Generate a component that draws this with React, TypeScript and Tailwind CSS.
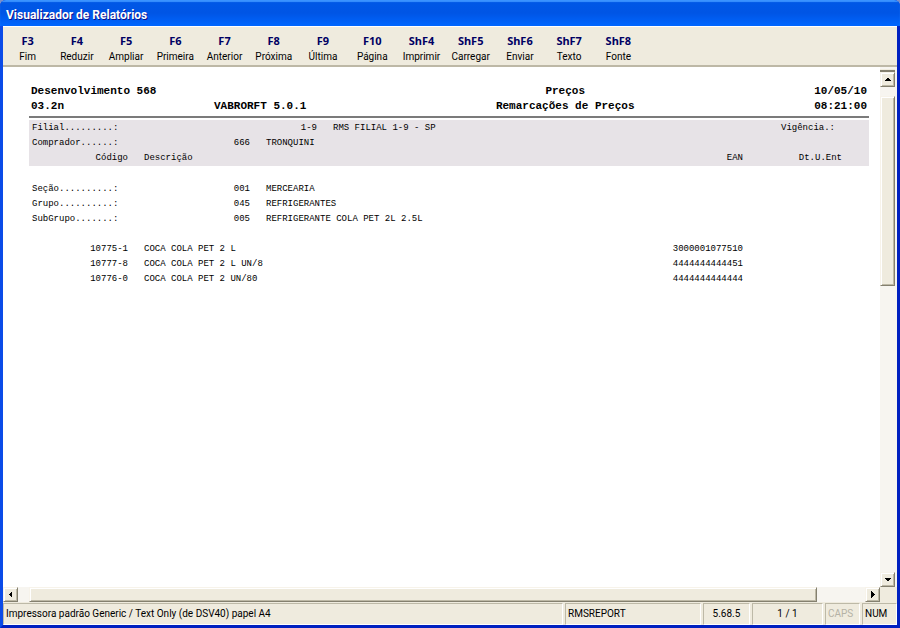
import React from "react";

type Shortcut = {
  shortcut: string;
  label: string;
};

type Product = {
  code: string;
  description: string;
  ean: string;
  lastEntry: string;
};

const SHORTCUTS: Shortcut[] = [
  { shortcut: "F3", label: "Fim" },
  { shortcut: "F4", label: "Reduzir" },
  { shortcut: "F5", label: "Ampliar" },
  { shortcut: "F6", label: "Primeira" },
  { shortcut: "F7", label: "Anterior" },
  { shortcut: "F8", label: "Próxima" },
  { shortcut: "F9", label: "Última" },
  { shortcut: "F10", label: "Página" },
  { shortcut: "ShF4", label: "Imprimir" },
  { shortcut: "ShF5", label: "Carregar" },
  { shortcut: "ShF6", label: "Enviar" },
  { shortcut: "ShF7", label: "Texto" },
  { shortcut: "ShF8", label: "Fonte" },
];

const GROUPS = [
  { label: "Seção..........:", code: "001", name: "MERCEARIA" },
  { label: "Grupo..........:", code: "045", name: "REFRIGERANTES" },
  { label: "SubGrupo.......:", code: "005", name: "REFRIGERANTE COLA PET 2L 2.5L" },
];

const PRODUCTS: Product[] = [
  { code: "10775-1", description: "COCA COLA PET 2 L", ean: "3000001077510", lastEntry: "" },
  { code: "10777-8", description: "COCA COLA PET 2 L UN/8", ean: "4444444444451", lastEntry: "" },
  { code: "10776-0", description: "COCA COLA PET 2 UN/80", ean: "4444444444444", lastEntry: "" },
];

// Raised edge shared by the scroll buttons and thumbs
const RAISED =
  "bg-[#efebde] border border-t-[#f7f3ea] border-l-[#f7f3ea] border-r-[#84806f] border-b-[#84806f] shadow-[inset_1px_1px_0_#ffffff,inset_-1px_-1px_0_#bdb8a5]";

const SUNKEN = "border border-t-[#bdb9a7] border-l-[#bdb9a7] border-r-white border-b-white";

function ScrollButton({ label, points }: { label: string; points: string }) {
  return (
    <button
      type="button"
      aria-label={label}
      className={`flex size-[15px] shrink-0 items-center justify-center ${RAISED}`}
    >
      <svg className="size-[9px] shrink-0" viewBox="0 0 9 9" shapeRendering="crispEdges">
        <polygon points={points} fill="#000" />
      </svg>
    </button>
  );
}

function Toolbar() {
  return (
    <div className="border-t border-b-2 border-t-white border-b-[#bdb8a6] bg-[#efebde] pt-[6px]">
      <div className="grid w-full max-w-[640px] grid-cols-13">
        {SHORTCUTS.map((item) => (
          <button key={item.shortcut} type="button" className="flex flex-col items-center">
            <span className="font-['Noto_Sans',sans-serif] text-[11px] leading-4 font-bold text-[#000063]">
              {item.shortcut}
            </span>
            <span className="text-[10px] leading-4 text-black">{item.label}</span>
          </button>
        ))}
      </div>
    </div>
  );
}

function InfoLine({
  label,
  code,
  name,
  wide,
  children,
}: {
  label: string;
  code: string;
  name: string;
  wide?: boolean;
  children?: React.ReactNode;
}) {
  return (
    <div className="flex pl-[3px]">
      <span className="w-[100px]">{label}</span>
      <span className={wide ? "w-[185px] text-right" : "w-[118px] text-right"}>{code}</span>
      <span className="ml-4">{name}</span>
      {children}
    </div>
  );
}

function Report() {
  return (
    <div className="min-w-0 flex-1 bg-white pt-[17px] pr-[11px] pl-[26px] font-['Liberation_Mono',monospace] text-black">
      <header className="grid grid-cols-[2fr_auto_1fr] border-b-2 border-[#7b7b7b] pr-[2px] pb-[2px] pl-[2px] text-[11px] leading-[15px] font-bold whitespace-pre">
        <div>Desenvolvimento 568</div>
        <h1 className="text-center">Preços</h1>
        <div className="text-right">10/05/10</div>
        <div className="flex">
          <span className="w-[183px]">03.2n</span>
          <span>VABRORFT 5.0.1</span>
        </div>
        <h2 className="text-center">Remarcações de Preços</h2>
        <div className="text-right">08:21:00</div>
      </header>

      <table className="mt-[2px] w-full table-fixed text-[9px] leading-[15px] whitespace-pre">
        <colgroup>
          <col className="w-[99px]" />
          <col />
          <col className="w-[140px]" />
          <col className="w-[126px]" />
        </colgroup>
        <thead className="bg-[#e7e3e7]">
          <tr>
            <td colSpan={4} className="pt-px">
              <InfoLine label="Filial.........:" code="1-9" name="RMS FILIAL 1-9 - SP" wide>
                <span className="mr-[34px] ml-auto">Vigência.:</span>
              </InfoLine>
            </td>
          </tr>
          <tr>
            <td colSpan={4}>
              <InfoLine label="Comprador......:" code="666" name="TRONQUINI" />
            </td>
          </tr>
          <tr>
            <th className="text-right font-normal">Código</th>
            <th className="pl-4 text-left font-normal">Descrição</th>
            <th className="text-right font-normal">EAN</th>
            <th className="pr-[27px] text-right font-normal">Dt.U.Ent</th>
          </tr>
        </thead>
        <tbody>
          <tr>
            <td colSpan={4} className="pt-4 pb-[15px]">
              {GROUPS.map((group) => (
                <InfoLine key={group.label} {...group} />
              ))}
            </td>
          </tr>
          {PRODUCTS.map((product) => (
            <tr key={product.code}>
              <td className="text-right">{product.code}</td>
              <td className="pl-4">{product.description}</td>
              <td className="text-right">{product.ean}</td>
              <td className="pr-[27px] text-right">{product.lastEntry}</td>
            </tr>
          ))}
        </tbody>
      </table>
    </div>
  );
}

function StatusBar() {
  return (
    <footer className="flex h-[23px] gap-[2px] border-t border-[#efebde] bg-[#efebde] text-[10px] leading-5 whitespace-nowrap text-black">
      <div className={`min-w-0 flex-1 pl-[2px] ${SUNKEN}`}>
        Impressora padrão Generic / Text Only (de DSV40) papel A4
      </div>
      <div className={`w-[136px] pl-[2px] ${SUNKEN}`}>RMSREPORT</div>
      <div className={`w-[47px] text-center ${SUNKEN}`}>5.68.5</div>
      <div className={`w-[71px] text-center ${SUNKEN}`}>1 / 1</div>
      <div className={`w-[35px] pl-[2px] text-[#b5b2a5] ${SUNKEN}`}>CAPS</div>
      <div className={`w-[35px] pl-[2px] ${SUNKEN}`}>NUM</div>
    </footer>
  );
}

export default function App() {
  return (
    <div className="flex min-h-screen flex-col bg-[#7b8fc8] font-['Roboto',sans-serif]">
      <div className="flex flex-1 flex-col overflow-hidden rounded-t-md bg-[#0831d9]">
        <div className="flex h-[26px] items-center bg-linear-to-b from-[#0058e6] via-[#0055e5] to-[#0066ff] pt-1 pl-[6px] shadow-[inset_0_2px_1px_#3a93ff]">
          <span className="text-[12px] leading-4 font-bold text-white [text-shadow:1px_1px_0_#0f1089]">
            Visualizador de Relatórios
          </span>
        </div>

        <div className="flex flex-1 flex-col border-r-[3px] border-b-[3px] border-l-[3px] border-r-[#0020c0] border-b-[#0020c0] border-l-[#0b4be8] bg-[#efebde]">
          <Toolbar />

          <main className="flex flex-1">
            <Report />
            <div className="flex w-[17px] flex-col bg-[#f7f5f0] pr-[2px]">
              <div className="mt-[2px] h-[3px] border-b-2 border-[#84806f] bg-[#efebde]" />
              <ScrollButton label="Rolar para cima" points="1,6 8,6 4.5,2.5" />
              <div className="flex-1 pt-[9px]">
                <div className={`h-[40%] ${RAISED}`} />
              </div>
              <ScrollButton label="Rolar para baixo" points="1,3 8,3 4.5,6.5" />
            </div>
          </main>

          <div className="flex h-[15px]">
            <ScrollButton label="Rolar para a esquerda" points="6,1 6,8 2.5,4.5" />
            <div className="flex-1 bg-[#f7f5f0] pr-12 pl-[11px]">
              <div className={`h-full ${RAISED}`} />
            </div>
            <ScrollButton label="Rolar para a direita" points="3,1 3,8 6.5,4.5" />
            <div className="w-[17px]" />
          </div>
          <StatusBar />
        </div>
      </div>
    </div>
  );
}
